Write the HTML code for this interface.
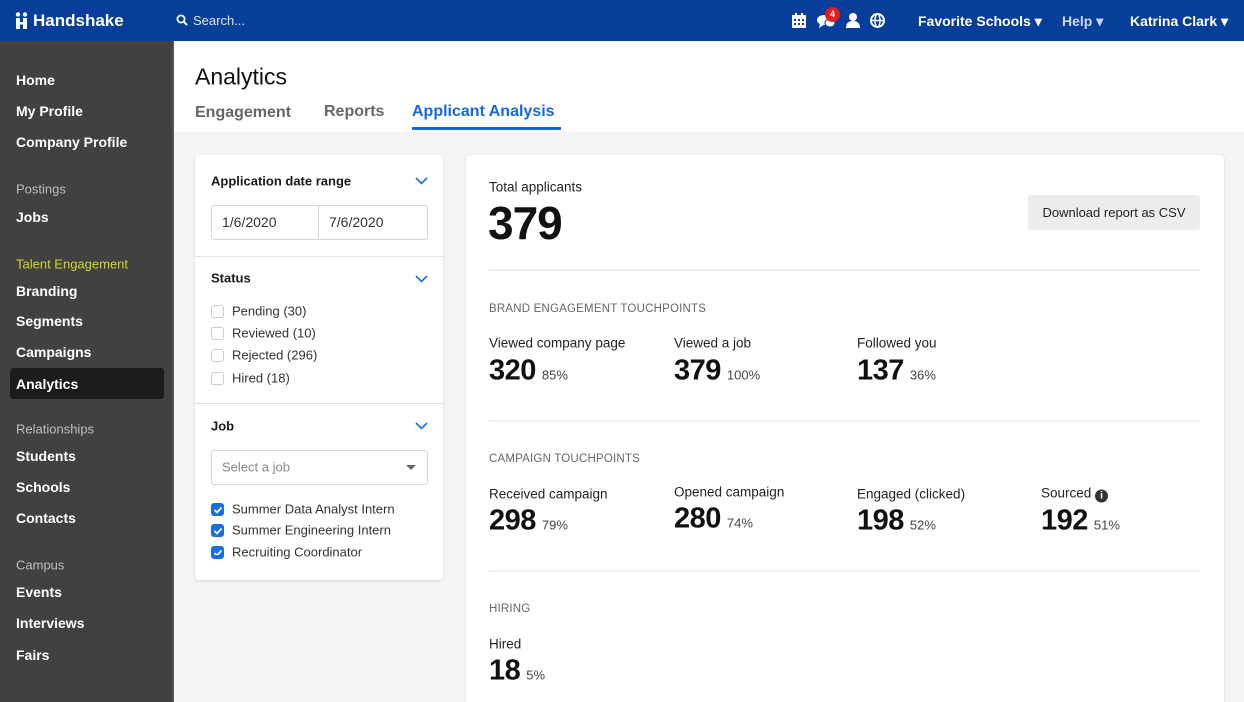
<!DOCTYPE html>
<html style="width:1244px;height:702px;overflow:hidden"><head><meta charset="utf-8"><style>
*{margin:0;padding:0;box-sizing:border-box}
body{width:1244px;height:702px;overflow:hidden;font-family:"Liberation Sans",sans-serif;background:#f5f5f5;position:relative;color:#1a1a1a}
.a{position:absolute;white-space:nowrap}
.top{position:absolute;left:0;top:0;width:1244px;height:41px;background:#063e99}
.top .a{color:#fff;font-weight:bold;font-size:14px}
.side{position:absolute;left:0;top:41px;width:174px;height:661px;background:#414141;border-right:2px solid #555}
.si{position:absolute;left:16px;color:#fff;font-size:14px;font-weight:bold;transform:translateY(-50%)}
.sh{position:absolute;left:16px;color:#bdbdbd;font-size:13px;transform:translateY(-50%)}
.m{transform:translateY(-50%)}
.card{position:absolute;background:#fff;border-radius:4px;box-shadow:0 1px 3px rgba(0,0,0,.12)}
.lbl{font-size:13.5px;color:#222}
.num{font-size:29px;font-weight:bold;color:#111;letter-spacing:-.5px}
.pct{font-size:13px;color:#444;font-weight:normal;letter-spacing:0;margin-left:6px}
.sec{font-size:11.5px;color:#666;letter-spacing:.2px}
.hr{position:absolute;left:489px;width:711px;height:2px;background:#eee}
.cb{position:absolute;left:211px;width:13px;height:13px;border:1px solid #ccc;border-radius:3px;background:#fff}
.cb.on{background:#1a6fe0;border-color:#1a6fe0}
.cbt{position:absolute;left:232px;font-size:13px;color:#333;transform:translateY(-50%)}
.chev{position:absolute;left:415px;width:13px;height:8px}
</style></head><body>
<div class="top">
<svg class="a" style="left:15px;top:12px" width="16" height="17" viewBox="0 0 16 17"><circle cx="3" cy="2.5" r="2.2" fill="#fff"/><circle cx="10" cy="2.5" r="2.2" fill="#fff"/><rect x="1" y="6" width="4" height="11" fill="#fff"/><rect x="8" y="6" width="4" height="11" fill="#fff"/><rect x="5" y="10" width="3" height="2.5" fill="#fff"/></svg>
<div class="a" style="left:33px;top:11px;font-size:17px">Handshake</div>
<svg class="a" style="left:176px;top:14px" width="12" height="12" viewBox="0 0 12 12"><circle cx="5" cy="5" r="3.6" stroke="#fff" stroke-width="1.8" fill="none"/><line x1="7.6" y1="7.6" x2="11" y2="11" stroke="#fff" stroke-width="2"/></svg>
<div class="a" style="left:193px;top:13px;font-size:13px;font-weight:normal;color:#dfe6f3">Search...</div>
<svg class="a" style="left:792px;top:13px" width="14" height="15" viewBox="0 0 14 15"><rect x="0" y="2" width="14" height="13" fill="#fff"/><rect x="3" y="0" width="2" height="3" fill="#fff"/><rect x="9" y="0" width="2" height="3" fill="#fff"/><g fill="#063e99"><rect x="2" y="6" width="2" height="2"/><rect x="6" y="6" width="2" height="2"/><rect x="10" y="6" width="2" height="2"/><rect x="2" y="10" width="2" height="2"/><rect x="6" y="10" width="2" height="2"/><rect x="10" y="10" width="2" height="2"/></g></svg>
<svg class="a" style="left:817px;top:13px" width="20" height="16" viewBox="0 0 20 16"><ellipse cx="7" cy="7" rx="7" ry="5" fill="#fff"/><path d="M3 10 L2 15 L8 11Z" fill="#fff"/><ellipse cx="13" cy="10" rx="5" ry="4" fill="#fff" stroke="#063e99" stroke-width="1"/></svg>
<div class="a" style="left:825px;top:7px;width:15px;height:15px;border-radius:50%;background:#e02020;font-size:9px;text-align:center;line-height:15px">4</div>
<svg class="a" style="left:846px;top:13px" width="14" height="15" viewBox="0 0 14 15"><circle cx="7" cy="4" r="4" fill="#fff"/><path d="M0 15 Q0 8 7 8 Q14 8 14 15Z" fill="#fff"/></svg>
<svg class="a" style="left:870px;top:13px" width="15" height="15" viewBox="0 0 15 15"><circle cx="7.5" cy="7.5" r="6.5" fill="none" stroke="#fff" stroke-width="2"/><ellipse cx="7.5" cy="7.5" rx="2.5" ry="6.5" fill="none" stroke="#fff" stroke-width="1.5"/><line x1="1" y1="7.5" x2="14" y2="7.5" stroke="#fff" stroke-width="1.5"/></svg>
<div class="a" style="left:918px;top:13px">Favorite Schools ▾</div>
<div class="a" style="left:1062px;top:13px;color:#cfd9ee">Help ▾</div>
<div class="a" style="left:1130px;top:13px">Katrina Clark ▾</div>
</div>
<div class="a" style="left:174px;top:41px;width:1070px;height:91px;background:#fff"></div>
<div class="side"></div>
<div class="si" style="top:80px">Home</div>
<div class="si" style="top:111px">My Profile</div>
<div class="si" style="top:142px">Company Profile</div>
<div class="sh" style="top:189px">Postings</div>
<div class="si" style="top:217px">Jobs</div>
<div class="sh" style="top:264px;color:#cbd62e">Talent Engagement</div>
<div class="si" style="top:291px">Branding</div>
<div class="si" style="top:321px">Segments</div>
<div class="si" style="top:352px">Campaigns</div>
<div class="a" style="left:10px;top:368px;width:154px;height:31px;background:#1c1c1c;border-radius:3px"></div>
<div class="si" style="top:384px">Analytics</div>
<div class="sh" style="top:429px">Relationships</div>
<div class="si" style="top:456px">Students</div>
<div class="si" style="top:487px">Schools</div>
<div class="si" style="top:518px">Contacts</div>
<div class="sh" style="top:565px">Campus</div>
<div class="si" style="top:592px">Events</div>
<div class="si" style="top:623px">Interviews</div>
<div class="si" style="top:655px">Fairs</div>

<div class="a m" style="left:195px;top:77px;font-size:23px;color:#111">Analytics</div>
<div class="a m" style="left:195px;top:113px;font-size:16px;font-weight:bold;color:#666">Engagement</div>
<div class="a m" style="left:324px;top:112px;font-size:16px;font-weight:bold;color:#666">Reports</div>
<div class="a m" style="left:412px;top:112px;font-size:16px;font-weight:bold;color:#1569e0">Applicant Analysis</div>
<div class="a" style="left:412px;top:127px;width:149px;height:3px;background:#1569e0"></div>

<div class="card" style="left:195px;top:155px;width:248px;height:425px"></div>
<div class="a m" style="left:211px;top:181px;font-size:13px;font-weight:bold">Application date range</div>
<svg class="chev" style="top:177px" viewBox="0 0 13 8"><path d="M1 1 L6.5 6.5 L12 1" stroke="#1a6fe0" stroke-width="1.6" fill="none"/></svg>
<div class="a" style="left:211px;top:205px;width:217px;height:35px;border:1px solid #d6d6d6;border-radius:3px"></div>
<div class="a" style="left:318px;top:206px;width:1px;height:33px;background:#d6d6d6"></div>
<div class="a m" style="left:222px;top:222px;font-size:14px;color:#333">1/6/2020</div>
<div class="a m" style="left:329px;top:222px;font-size:14px;color:#333">7/6/2020</div>
<div class="a" style="left:195px;top:256px;width:248px;height:1px;background:#e3e3e3"></div>
<div class="a m" style="left:211px;top:278px;font-size:13px;font-weight:bold">Status</div>
<svg class="chev" style="top:275px" viewBox="0 0 13 8"><path d="M1 1 L6.5 6.5 L12 1" stroke="#1a6fe0" stroke-width="1.6" fill="none"/></svg>
<div class="cb" style="top:305px"></div><div class="cbt" style="top:311px">Pending (30)</div>
<div class="cb" style="top:327px"></div><div class="cbt" style="top:333px">Reviewed (10)</div>
<div class="cb" style="top:349px"></div><div class="cbt" style="top:355px">Rejected (296)</div>
<div class="cb" style="top:372px"></div><div class="cbt" style="top:378px">Hired (18)</div>
<div class="a" style="left:195px;top:403px;width:248px;height:1px;background:#e3e3e3"></div>
<div class="a m" style="left:211px;top:426px;font-size:13px;font-weight:bold">Job</div>
<svg class="chev" style="top:422px" viewBox="0 0 13 8"><path d="M1 1 L6.5 6.5 L12 1" stroke="#1a6fe0" stroke-width="1.6" fill="none"/></svg>
<div class="a" style="left:211px;top:450px;width:217px;height:35px;border:1px solid #d6d6d6;border-radius:3px"></div>
<div class="a m" style="left:222px;top:467px;font-size:13px;color:#888">Select a job</div>
<div class="a" style="left:406px;top:465px;width:0;height:0;border-left:5px solid transparent;border-right:5px solid transparent;border-top:5px solid #666"></div>
<div class="cb on" style="top:503px"></div><div class="cbt" style="top:509px">Summer Data Analyst Intern</div>
<div class="cb on" style="top:524px"></div><div class="cbt" style="top:530px">Summer Engineering Intern</div>
<div class="cb on" style="top:546px"></div><div class="cbt" style="top:552px">Recruiting Coordinator</div>
<svg class="a" style="left:213px;top:505px" width="10" height="50" viewBox="0 0 10 50"><g stroke="#fff" stroke-width="1.8" fill="none"><path d="M1.5 5 L4 7.5 L8.5 2.5"/><path d="M1.5 26 L4 28.5 L8.5 23.5"/><path d="M1.5 48 L4 50.5 L8.5 45.5"/></g></svg>

<div class="card" style="left:466px;top:155px;width:758px;height:547px;border-radius:4px 4px 0 0"></div>
<div class="a m lbl" style="left:489px;top:187px;font-size:13.5px">Total applicants</div>
<div class="a m" style="left:488px;top:223px;font-size:46px;font-weight:bold;letter-spacing:-1px;color:#111">379</div>
<div class="a" style="left:1028px;top:195px;width:172px;height:35px;background:#ededed;border-radius:3px;font-size:13px;text-align:center;line-height:35px;color:#222">Download report as CSV</div>
<div class="hr" style="top:269px"></div>
<div class="a m sec" style="left:489px;top:309px">BRAND ENGAGEMENT TOUCHPOINTS</div>
<div class="a m lbl" style="left:489px;top:343px">Viewed company page</div>
<div class="a m lbl" style="left:674px;top:343px">Viewed a job</div>
<div class="a m lbl" style="left:857px;top:343px">Followed you</div>
<div class="a m num" style="left:489px;top:371px">320<span class="pct">85%</span></div>
<div class="a m num" style="left:674px;top:371px">379<span class="pct">100%</span></div>
<div class="a m num" style="left:857px;top:371px">137<span class="pct">36%</span></div>
<div class="hr" style="top:420px"></div>
<div class="a m sec" style="left:489px;top:459px">CAMPAIGN TOUCHPOINTS</div>
<div class="a m lbl" style="left:489px;top:494px">Received campaign</div>
<div class="a m lbl" style="left:674px;top:492px">Opened campaign</div>
<div class="a m lbl" style="left:857px;top:494px">Engaged (clicked)</div>
<div class="a m lbl" style="left:1041px;top:494px">Sourced <span style="display:inline-block;width:13px;height:13px;border-radius:50%;background:#333;color:#fff;font-size:10px;font-weight:bold;text-align:center;line-height:13px;vertical-align:-1px">i</span></div>
<div class="a m num" style="left:489px;top:521px">298<span class="pct">79%</span></div>
<div class="a m num" style="left:674px;top:519px">280<span class="pct">74%</span></div>
<div class="a m num" style="left:857px;top:521px">198<span class="pct">52%</span></div>
<div class="a m num" style="left:1041px;top:521px">192<span class="pct">51%</span></div>
<div class="hr" style="top:570px"></div>
<div class="a m sec" style="left:489px;top:609px">HIRING</div>
<div class="a m lbl" style="left:489px;top:644px">Hired</div>
<div class="a m num" style="left:489px;top:671px">18<span class="pct">5%</span></div>
</body></html>
